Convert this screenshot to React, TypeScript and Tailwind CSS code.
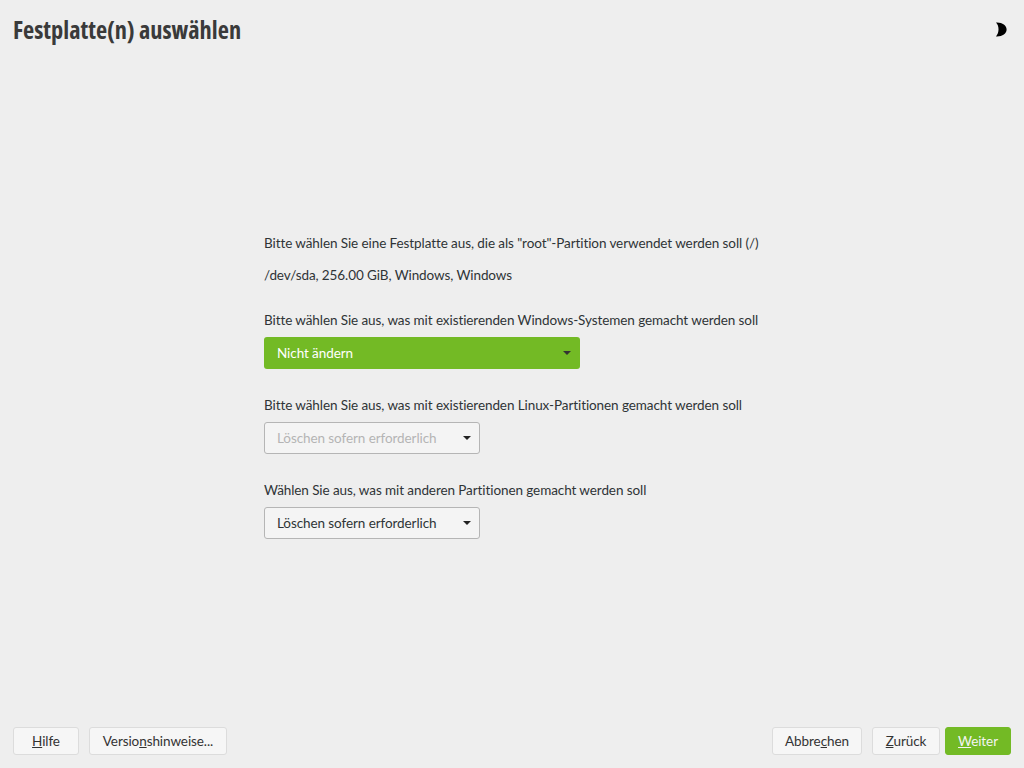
const body = "font-['Lato','Noto_Sans',sans-serif] text-[13.5px] tracking-[-0.085px]";

function Caret({ className = 'fill-[#222222]' }: { className?: string }) {
  return (
    <svg width="8" height="4" viewBox="0 0 8 4" className={className}>
      <path d="M0 0h8L4 4z" />
    </svg>
  );
}

function Combo({ label, disabled }: { label: string; disabled?: boolean }) {
  return (
    <div className="flex h-8 w-[216px] items-center justify-between rounded-[3px] border border-[#b5b5b5] bg-[#f4f4f4] pl-3 pr-2">
      <span className={disabled ? 'text-[#b4b4b4]' : 'text-[#2e3436]'}>{label}</span>
      <Caret />
    </div>
  );
}

function Btn({ children, green, w }: { children: React.ReactNode; green?: boolean; w: string }) {
  return (
    <div
      className={`flex h-7 items-center justify-center rounded-[3px] border ${w} ${
        green
          ? 'border-[#73ba25] bg-[#73ba25] text-[#f4f4f4]'
          : 'border-[#dcdcdc] bg-[#f6f6f6] text-[#333333]'
      }`}
    >
      <span>{children}</span>
    </div>
  );
}

export default function App() {
  return (
    <div className={`flex h-[768px] w-[1024px] flex-col overflow-hidden bg-[#eeeeee] text-[#2e3436] ${body}`}>
      <header className="flex h-[60px] shrink-0 items-center justify-between pl-[13px] pr-[17px]">
        <h1 className="font-['Open_Sans',sans-serif] text-[24.4px] font-bold tracking-normal text-[#3a3a3a] [font-stretch:75%]">
          Festplatte(n) auswählen
        </h1>
        <svg width="12" height="15" viewBox="0 0 12 15" className="mt-[-1px]">
          <path d="M1 0.6 C7 0.2 11.6 3.2 11.6 7.5 C11.6 11.8 7 14.8 1 14.4 C4.4 11 4.4 4 1 0.6z" fill="#000000" />
        </svg>
      </header>

      <main className="flex flex-1 flex-col pl-[264px] pt-[173px]">
        <p className="leading-5">Bitte wählen Sie eine Festplatte aus, die als "root"-Partition verwendet werden soll (/)</p>
        <p className="mt-3 leading-5">/dev/sda, 256.00 GiB, Windows, Windows</p>

        <p className="mt-[25px] leading-5">Bitte wählen Sie aus, was mit existierenden Windows-Systemen gemacht werden soll</p>
        <div className="mt-[7px] flex h-8 w-[316px] items-center justify-between rounded-[3px] bg-[#73ba25] pl-[13px] pr-[9px] text-white">
          <span>Nicht ändern</span>
          <Caret className="fill-[#333333]" />
        </div>

        <p className="mt-[26px] leading-5">Bitte wählen Sie aus, was mit existierenden Linux-Partitionen gemacht werden soll</p>
        <div className="mt-[7px]">
          <Combo label="Löschen sofern erforderlich" disabled />
        </div>

        <p className="mt-[26px] leading-5">Wählen Sie aus, was mit anderen Partitionen gemacht werden soll</p>
        <div className="mt-[7px]">
          <Combo label="Löschen sofern erforderlich" />
        </div>
      </main>

      <footer className="flex h-[41px] shrink-0 items-start justify-between px-[13px]">
        <div className="flex gap-[10px]">
          <Btn w="w-[66px]"><u>H</u>ilfe</Btn>
          <Btn w="w-[138px]">Versio<u>n</u>shinweise...</Btn>
        </div>
        <div className="flex gap-[10px]">
          <Btn w="w-[90px]">Abbre<u>c</u>hen</Btn>
          <div className="flex gap-[5px]">
            <Btn w="w-[68px]"><u>Z</u>urück</Btn>
            <Btn w="w-[66px]" green><u>W</u>eiter</Btn>
          </div>
        </div>
      </footer>
    </div>
  );
}
